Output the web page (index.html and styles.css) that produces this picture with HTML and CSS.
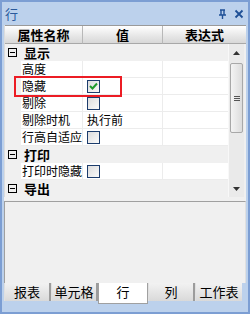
FILE: index.html
```html
<!DOCTYPE html>
<html lang="zh-CN">
<head>
    <meta charset="UTF-8">
    <title>行</title>
    <link rel="stylesheet" href="styles.css">
</head>
<body>
    <div class="panel">
        <div class="titlebar">
            <span class="title">行</span>
            <span class="tools">
                <svg width="9" height="10" viewBox="0 0 9 10"><path d="M2 1h5M3 1v5M6 1v5M1 6h7M4.5 6v4" stroke="#1e4f96" stroke-width="1.4" fill="none"/></svg>
                <svg width="10" height="10" viewBox="0 0 10 10"><path d="M1.5 1.5l7 7M8.5 1.5l-7 7" stroke="#1e4f96" stroke-width="1.8"/></svg>
            </span>
        </div>

        <div class="content">
            <div class="grid">
                <div class="header">
                    <div class="hcell c-name">属性名称</div>
                    <div class="hcell c-val">值</div>
                    <div class="hcell c-expr">表达式</div>
                </div>
                <div class="body">
                    <div class="rows">
                        <div class="group"><span class="toggle"></span>显示</div>
                        <div class="row"><div class="gut"></div><div class="name">高度</div><div class="val"></div><div class="expr"></div></div>
                        <div class="row"><div class="gut"></div><div class="name">隐藏</div><div class="val"><span class="check on"><svg width="9" height="8" viewBox="0 0 9 8"><path d="M1 4l2.5 2.5L8 1.5" stroke="#1f9a2c" stroke-width="2" fill="none"/></svg></span></div><div class="expr"></div></div>
                        <div class="row"><div class="gut"></div><div class="name">剔除</div><div class="val"><span class="check"></span></div><div class="expr"></div></div>
                        <div class="row"><div class="gut"></div><div class="name">剔除时机</div><div class="val">执行前</div><div class="expr"></div></div>
                        <div class="row"><div class="gut"></div><div class="name">行高自适应</div><div class="val"><span class="check"></span></div><div class="expr"></div></div>
                        <div class="group"><span class="toggle"></span>打印</div>
                        <div class="row"><div class="gut"></div><div class="name">打印时隐藏</div><div class="val"><span class="check"></span></div><div class="expr"></div></div>
                        <div class="group"><span class="toggle"></span>导出</div>
                    </div>
                    <div class="scrollbar">
                        <div class="arrow"><svg width="7" height="4" viewBox="0 0 7 4"><path d="M0 4L3.5 0L7 4z" fill="#333"/></svg></div>
                        <div class="track">
                            <div class="thumb"><span class="grip"></span></div>
                        </div>
                        <div class="arrow"><svg width="7" height="4" viewBox="0 0 7 4"><path d="M0 0L3.5 4L7 0z" fill="#333"/></svg></div>
                    </div>
                </div>
                <div class="mark"></div>
            </div>
            <div class="desc"></div>
        </div>

        <div class="tabs">
            <div class="tab">报表</div>
            <div class="tab">单元格</div>
            <div class="tab active">行</div>
            <div class="tab">列</div>
            <div class="tab">工作表</div>
        </div>
    </div>
</body>
</html>
```

FILE: styles.css
```css
* {
    margin: 0;
    padding: 0;
    box-sizing: border-box;
}

body {
    font-family: "Noto Sans CJK SC", "Liberation Sans", sans-serif;
    font-size: 12px;
    color: #000;
    background: #fff;
}

.panel {
    width: 250px;
    height: 314px;
    background: #bcd1ec;
    border: 2px solid #7c9ed3;
    display: flex;
    flex-direction: column;
}

.titlebar {
    height: 23px;
    display: flex;
    align-items: center;
    justify-content: space-between;
    padding: 0 4px 0 3px;
}

.title {
    color: #2a5a9c;
    font-size: 13px;
}

.tools {
    display: flex;
    gap: 7px;
    align-items: center;
}

.content {
    background: #f0f0f0;
    margin: 0 2px;
    height: 258px;
    display: flex;
    flex-direction: column;
}

.grid {
    position: relative;
    background: #f0f0f0;
    border-left: 1px solid #dcdcdc;
}

.header {
    display: flex;
    height: 19px;
    border-top: 1px solid #9a9a9a;
}

.hcell {
    font-weight: bold;
    font-size: 13px;
    text-align: center;
    line-height: 17px;
    background: linear-gradient(#ffffff, #e6e6e6 60%, #d8d8d8);
    border-right: 1px solid #b8b8b8;
    border-bottom: 1px solid #a8a8a8;
}

.c-name { width: 78px; }
.c-val { width: 80px; }
.c-expr { flex: 1; border-right: none; }

.body {
    display: flex;
}

.rows {
    width: 223px;
}

.group {
    height: 17px;
    line-height: 16px;
    display: flex;
    align-items: center;
    font-weight: bold;
    font-size: 13px;
    background: #f0f0f0;
}

.toggle {
    width: 9px;
    height: 9px;
    border: 1px solid #000;
    margin: 0 7px 0 3px;
    position: relative;
}

.toggle::after {
    content: "";
    position: absolute;
    left: 1px;
    right: 1px;
    top: 3px;
    height: 1px;
    background: #000;
}

.row {
    height: 17px;
    display: flex;
}

.gut {
    width: 16px;
    background: #f0f0f0;
}

.name, .val, .expr {
    background: #fff;
    border-bottom: 1px solid #ececec;
    line-height: 16px;
}

.name {
    width: 62px;
    padding-left: 1px;
    border-right: 1px solid #ececec;
}

.val {
    width: 80px;
    padding-left: 4px;
    border-right: 1px solid #ececec;
    display: flex;
    align-items: center;
}

.expr {
    flex: 1;
}

.check {
    width: 13px;
    height: 13px;
    border: 1px solid #1c3c6c;
    background: linear-gradient(135deg, #dcdcdc, #fafafa);
    display: flex;
    align-items: center;
    justify-content: center;
}

.scrollbar {
    width: 16px;
    display: flex;
    flex-direction: column;
    background: #eaeaea;
    border-left: 1px solid #f8f8f8;
}

.arrow {
    height: 17px;
    display: flex;
    align-items: center;
    justify-content: center;
}

.track {
    flex: 1;
    padding: 2px 0 0;
}

.thumb {
    height: 70px;
    margin: 0 1px;
    border: 1px solid #a8a8a8;
    border-radius: 2px;
    background: linear-gradient(90deg, #f4f4f4, #dcdcdc);
    display: flex;
    align-items: center;
    justify-content: center;
}

.grip {
    width: 6px;
    height: 5px;
    border-top: 1px solid #555;
    border-bottom: 1px solid #555;
    position: relative;
}

.grip::after {
    content: "";
    position: absolute;
    left: 0;
    right: 0;
    top: 1px;
    height: 1px;
    background: #555;
}

.mark {
    position: absolute;
    left: 9px;
    top: 51px;
    width: 108px;
    height: 21px;
    border: 2px solid #ec1c24;
}

.desc {
    margin: 4px 0 0 0;
    height: 82px;
    border-top: 1px solid #a0a0a0;
    border-left: 1px solid #a0a0a0;
    border-right: 1px solid #e0e0e0;
    background: #f0f0f0;
}

.tabs {
    display: flex;
    margin: 0 2px;
    height: 21px;
    background: #bcd1ec;
}

.tab {
    height: 18px;
    line-height: 18px;
    font-size: 13px;
    text-align: center;
    background: linear-gradient(#f2f2f2, #d9d9d9);
    border-right: 2px solid #9c9c9c;
    border-left: 1px solid #e0e0e0;
    width: 47px;
}

.tab.active {
    background: #fff;
    height: 21px;
    width: 50px;
    border: 1px solid #a0a0a0;
    border-top: none;
}

.tab:last-child {
    border-right: none;
}
```
